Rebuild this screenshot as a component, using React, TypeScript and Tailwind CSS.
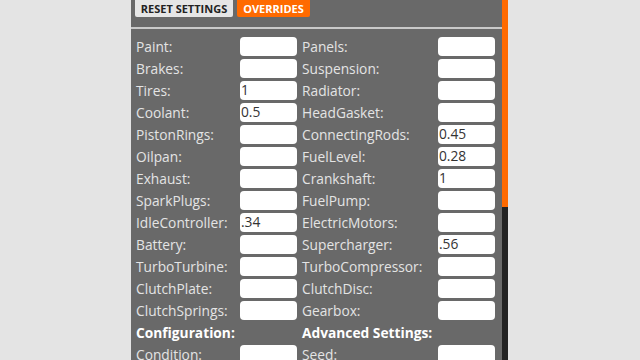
import React from 'react';

type Field = { label: string; value?: string };

const left: Field[] = [
  { label: 'Paint' },
  { label: 'Brakes' },
  { label: 'Tires', value: '1' },
  { label: 'Coolant', value: '0.5' },
  { label: 'PistonRings' },
  { label: 'Oilpan' },
  { label: 'Exhaust' },
  { label: 'SparkPlugs' },
  { label: 'IdleController', value: '.34' },
  { label: 'Battery' },
  { label: 'TurboTurbine' },
  { label: 'ClutchPlate' },
  { label: 'ClutchSprings' },
];

const right: Field[] = [
  { label: 'Panels' },
  { label: 'Suspension' },
  { label: 'Radiator' },
  { label: 'HeadGasket' },
  { label: 'ConnectingRods', value: '0.45' },
  { label: 'FuelLevel', value: '0.28' },
  { label: 'Crankshaft', value: '1' },
  { label: 'FuelPump' },
  { label: 'ElectricMotors' },
  { label: 'Supercharger', value: '.56' },
  { label: 'TurboCompressor' },
  { label: 'ClutchDisc' },
  { label: 'Gearbox' },
];

function Row({ field }: { field: Field }) {
  return (
    <>
      <label className="h-[22px] whitespace-nowrap leading-[22px] text-[#e4e4e4]">{field.label}:</label>
      <div>
        <input
          readOnly
          defaultValue={field.value ?? ''}
          className="mt-[1px] h-[19px] w-[57px] rounded-[4px] bg-white pl-[1px] text-[13.75px] text-[#333] outline-none"
        />
      </div>
    </>
  );
}

export default function App() {
  return (
    <div
      className="flex h-[360px] w-[640px] overflow-hidden bg-[#e4e4e4] text-[13.75px]"
      style={{ fontFamily: '"Open Sans", "Noto Sans", sans-serif' }}
    >
      <div className="ml-[131px] w-[371px] bg-[#696969]">
        {/* tabs */}
        <div className="flex gap-[4px] pl-[4px]">
          <button className="h-[17px] w-[98px] rounded-b-[2px] bg-[#e6e6e6] text-[11px] font-bold leading-[16px] text-[#222]">
            RESET SETTINGS
          </button>
          <button className="h-[17px] w-[73px] rounded-b-[2px] bg-[#ff6a00] text-[11px] font-bold leading-[16px] text-white">
            OVERRIDES
          </button>
        </div>
        <div className="mt-[10px] h-[2px] bg-[#c9c9c9]" />

        {/* override fields */}
        <div className="mt-[7px] grid grid-cols-[104px_62px_136px_57px] pl-[5px]">
          {left.map((f, i) => (
            <React.Fragment key={f.label}>
              <Row field={f} />
              <Row field={right[i]} />
            </React.Fragment>
          ))}
          <div className="col-span-2 h-[22px] whitespace-nowrap font-bold leading-[22px] text-white">Configuration:</div>
          <div className="col-span-2 h-[22px] whitespace-nowrap font-bold leading-[22px] text-white">Advanced Settings:</div>
          <Row field={{ label: 'Condition' }} />
          <Row field={{ label: 'Seed' }} />
        </div>
      </div>

      {/* scrollbar */}
      <div className="flex w-[6px] flex-col">
        <div className="h-[207px] bg-[#ff6a00]" />
        <div className="flex-1 bg-[#222]" />
      </div>
    </div>
  );
}
